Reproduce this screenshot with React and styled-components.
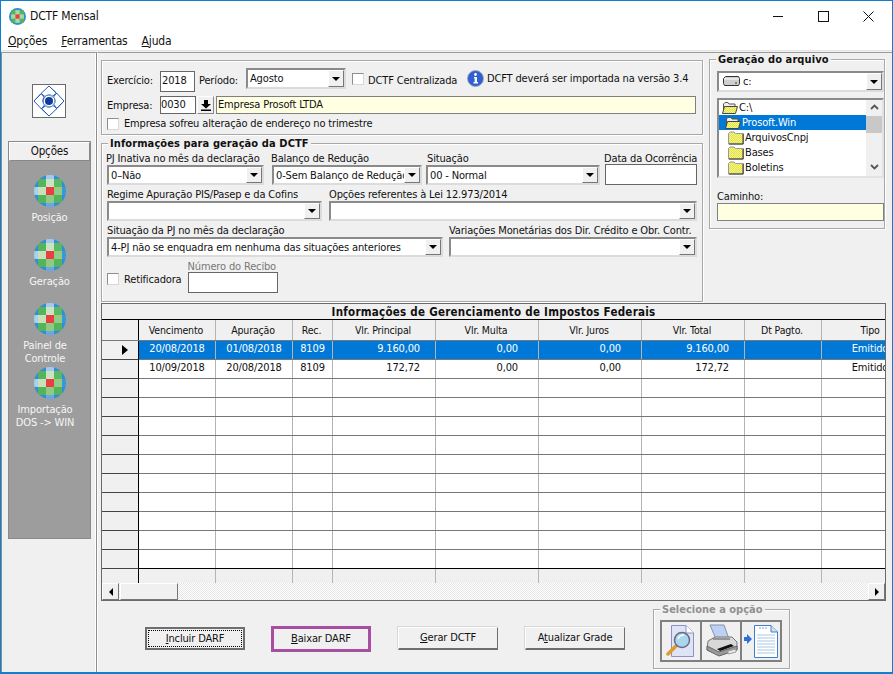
import React from "react";
import styled, { createGlobalStyle } from "styled-components";

const Global = createGlobalStyle`
  html, body { margin: 0; padding: 0; background: #f0f0f0; }
  * { box-sizing: border-box; }
  body { font-family: "DejaVu Sans Condensed", "DejaVu Sans", sans-serif; font-stretch: condensed; font-size: 11px; color: #111; letter-spacing: -0.15px; }
`;

const Window = styled.div`
  width: 893px; height: 674px; border: 1px solid #0f7fd0; border-bottom-width: 2px;
  display: flex; flex-direction: column; background: #f0f0f0; overflow: hidden;
`;
const TitleBar = styled.div`
  height: 31px; background: #fff; display: flex; align-items: center; padding: 0 0 1px 8px; flex: none;
`;
const TitleText = styled.span`font-size: 12px; margin-left: 4px; flex: 1;`;
const WinButtons = styled.div`display: flex; width: 119px; align-items: center; justify-content: flex-start; gap: 34px;`;
const MenuBar = styled.div`
  height: 18px; background: #fff; display: flex; align-items: center; padding-left: 7px; gap: 14px; flex: none; font-size: 12px;
`;
const Body = styled.div`
  flex: 1; display: flex; min-height: 0; border-top: 1px solid #e4e4e4;
`;
const Sidebar = styled.div`
  width: 96px; padding: 31px 0 0 6px; flex: none; display: flex; flex-direction: column;
  border-top: 1px solid #9a9a9a; border-left: 1px solid #8d8d8d; border-right: 1px solid #8d8d8d; margin-top: 1px;
  box-shadow: inset -1px 0 0 #fff;
`;
const LogoBox = styled.div`
  width: 34px; height: 34px; border: 1px solid #6a6a6a; background: #fff; margin-left: 24px; display: flex;
`;
const OptionsPanel = styled.div`
  width: 83px; height: 398px; margin-top: 23px; border: 1px solid #8a8a8a; background: #9d9d9d; display: flex; flex-direction: column;
`;
const OptionsHead = styled.div`
  height: 19px; flex: none; background: #f0f0f0; border: 1px solid #fff; border-right-color: #888; border-bottom-color: #888;
  text-align: center; line-height: 17px; font-size: 11.5px;
`;
const OptionsList = styled.div`padding-top: 14px; display: flex; flex-direction: column;`;
const SideItem = styled.div`height: 64px; display: flex; flex-direction: column; align-items: center;`;
const SideLabel = styled.div`
  color: #f6f6f6; text-align: center; line-height: 13px; margin-top: 4px; padding-right: ${p => p.$shift || 0}px; font-size: 11px; white-space: nowrap;
`;
const Main = styled.div`
  flex: 1; min-width: 0; display: flex; flex-direction: column; padding: 7px 0 0 3px; margin-top: 1px;
  border-top: 1px solid #9a9a9a; border-left: 1px solid #fff; 
`;
const TopRow = styled.div`display: flex; align-items: flex-start; gap: 6px;`;
const LeftCol = styled.div`width: 602px; display: flex; flex-direction: column; gap: 8px;`;

const Group = styled.div`
  position: relative; width: ${p => p.$w}px; height: ${p => p.$h}px; border: 1px solid #a8a8a8; flex: none;
  box-shadow: 1px 1px 0 #fff, inset 1px 1px 0 #fff; padding: ${p => p.$pad || "0"}; margin-top: ${p => p.$mt || 0}px; margin-left: ${p => p.$ml || 0}px;
`;
const Legend = styled.div`
  position: absolute; top: -7px; left: ${p => p.$x}px; padding: 0 2px; background: #f0f0f0; font-weight: 700;
  font-size: 11px; line-height: 14px; color: ${p => p.$c || "#111"}; white-space: nowrap; letter-spacing: ${p => p.$ls ?? 0.1}px;
`;

const Row = styled.div`display: flex; align-items: ${p => p.$align || "center"}; margin-top: ${p => p.$mt || 0}px;`;
const InlineLabel = styled.span`
  width: ${p => p.$w ? p.$w + "px" : "auto"}; margin-left: ${p => p.$ml || 0}px; margin-bottom: ${p => p.$mb || 0}px; white-space: nowrap; flex: none;
  margin-top: ${p => p.$mt || 0}px; line-height: 13px;
`;
const TextBox = styled.div`
  width: ${p => p.$w}px; height: ${p => p.$h || 21}px; background: ${p => p.$bg || "#fff"};
  border: 1px solid ${p => p.$line || "#666"}; padding-left: ${p => p.$pl ?? 1}px; line-height: ${p => (p.$h || 21) - 3}px;
  margin: ${p => p.$mt || 0}px 0 0 ${p => p.$ml || 0}px; flex: none; white-space: nowrap; overflow: hidden; font-size: 11px;
`;
const Combo = styled.div`
  width: ${p => p.$w}px; height: ${p => p.$h || 20}px; flex: none; display: flex; background: #fff;
  border: 2px solid; border-color: #8a8a8a #dcdcdc #dcdcdc #8a8a8a; overflow: hidden;
`;
const ComboText = styled.div`
  flex: 1; min-width: 0; overflow: hidden; white-space: nowrap; padding-left: ${p => p.$pl ?? 2}px; line-height: 15px; font-size: 11px; display: flex; align-items: center; gap: 3px;
`;
const Arrow = styled.div`
  width: 16px; flex: none; background: #f0f0f0; border-right: 1px solid #777; border-bottom: 1px solid #777;
  border-left: 1px solid #fff; border-top: 1px solid #fff; display: flex; align-items: center; justify-content: center;
  &::after { content: ""; border-left: 4px solid transparent; border-right: 4px solid transparent; border-top: 4px solid #000; }
`;
const PickButton = styled.div`
  width: 17px; height: 18px; margin-left: 1px; flex: none; background: #f0f0f0; border: 1px solid #fff; border-right-color: #888; border-bottom-color: #888;
  display: flex; align-items: center; justify-content: center;
`;
const Check = styled.div`
  width: 12px; height: 12px; background: #fff; border: 1px solid #8e8e8e; border-right-color: #d8d8d8; border-bottom-color: #d8d8d8; flex: none;
  margin: ${p => p.$mt || 0}px 0 ${p => p.$mb || 0}px ${p => p.$ml || 0}px;
`;
const IconSlot = styled.div`display: flex; flex: none; margin: ${p => p.$mt || 0}px 0 0 ${p => p.$ml || 0}px;`;
const Field = styled.div`width: ${p => p.$w}px; margin-left: ${p => p.$ml || 0}px; flex: none; display: flex; flex-direction: column;`;
const FieldLabel = styled.div`
  height: ${p => p.$h || 13}px; line-height: ${p => p.$h || 13}px; margin-left: ${p => p.$x || 0}px; white-space: nowrap; color: ${p => p.$c || "#111"};
`;
const FieldRow = styled.div`display: flex; align-items: flex-end; margin-top: ${p => p.$mt ?? 3}px;`;

const DriveGroupBody = styled.div`padding: 11px 0 0 7px; display: flex; flex-direction: column;`;
const FolderBox = styled.div`
  width: 167px; height: 80px; margin-top: 6px; background: #fff; border: 2px solid; border-color: #8a8a8a #e2e2e2 #e2e2e2 #8a8a8a; display: flex; overflow: hidden;
`;
const FolderList = styled.div`flex: 1; overflow: hidden;`;
const FolderItem = styled.div`
  height: 15px; display: flex; align-items: center; gap: 1px; padding-left: ${p => p.$pl}px; white-space: nowrap; font-size: 11px;
  background: ${p => p.$on ? "#0078d7" : "transparent"}; color: ${p => p.$on ? "#fff" : "#111"};
`;
const ListScroll = styled.div`
  width: 16px; flex: none; display: flex; flex-direction: column; align-items: center; background: #f0f0f0; padding-top: 4px;
`;
const ScrollThumb = styled.div`width: 16px; height: 17px; background: #c8c8c8; margin-top: 6px; flex: none;`;
const ScrollDown = styled.div`margin-top: 31px; display: flex; flex: none;`;
const PathLabel = styled.div`margin-top: 12px; height: 13px; line-height: 13px;`;
const PathBox = styled.div`width: 167px; height: 18px; background: #ffffe1; border: 1px solid #808080;`;

const GridWrap = styled.div`
  width: 785px; height: 298px; margin-top: 1px; border: 1px solid #6a6a6a; display: flex; flex-direction: column; overflow: hidden; flex: none;
`;
const GridTitle = styled.div`
  height: 16px; flex: none; border-bottom: 1px solid #000; text-align: center; font-weight: 700; font-size: 11.5px; line-height: 16px; letter-spacing: .26px;
`;
const cols = "37px 77px 77px 40px 103px 103px 103px 103px 77px 1fr";
const GridRow = styled.div`
  display: grid; grid-template-columns: ${cols}; flex: none; height: ${p => p.$h}px;
  border-bottom: ${p => p.$noline ? "none" : `1px solid ${p.$line || "#777"}`};
  background: ${p => p.$on ? "#0078d7" : p.$head ? "#f0f0f0" : "#fff"};
  color: ${p => p.$on ? "#fff" : "#111"};
`;
const Cell = styled.div`
  border-right: ${p => p.$last ? "none" : "1px solid #b4b4b4"}; overflow: hidden; white-space: nowrap; text-align: ${p => p.$align || "center"};
  padding-right: ${p => p.$pr || 0}px; line-height: ${p => p.$lh || 15}px; font-size: ${p => p.$fs || 11}px;
`;
const HeadCell = styled(Cell)`padding-right: 2px; line-height: 20px; font-size: 10.5px;`;
const FixedCell = styled.div`
  background: #f0f0f0; border-right: 1px solid #000; display: flex; align-items: center; justify-content: center; padding-left: 10px;
  margin-bottom: ${p => p.$plain ? 0 : -1}px; border-bottom: ${p => p.$plain ? "none" : "1px solid #444"}; color: #000;
`;
const Marker = styled.div`border-left: 6px solid #000; border-top: 5px solid transparent; border-bottom: 5px solid transparent;`;
const TipoText = styled.div`width: 96px; text-align: center;`;
const HScroll = styled.div`height: 17px; flex: none; display: flex; background-color: #f4f4f4;
  background-image: conic-gradient(#e6e6e6 25%, #fff 0 50%, #e6e6e6 0 75%, #fff 0); background-size: 2px 2px;`;
const HTrack = styled.div`flex: 1;`;
const ScrollBtn = styled.div`
  width: ${p => p.$w || 17}px; flex: none; background: #f0f0f0; border: 1px solid #fff; border-right-color: #777; border-bottom-color: #777;
  display: flex; align-items: center; justify-content: center; margin-left: ${p => p.$ml || 0}px;
`;
const Tri = styled.div`
  border-top: 4px solid transparent; border-bottom: 4px solid transparent;
  ${p => p.$left ? "border-right: 4px solid #000;" : "border-left: 4px solid #000;"}
`;

const Footer = styled.div`display: flex; align-items: flex-start; padding: 8px 0 0 44px;`;
const Btn = styled.div`
  position: relative; width: 100px; height: 23px; margin-top: 18px; flex: none; margin-left: ${p => p.$ml || 0}px;
  background: #f0f0f0; border: 1px solid #fff; border-right: 1px solid #6e6e6e; border-bottom: 2px solid #6e6e6e;
  box-shadow: -1px -1px 0 #d8d8d8; text-align: center; line-height: 20px; font-size: 11px; white-space: nowrap;
`;
const FocusBtn = styled(Btn)`
  border: 2px solid #6e6e6e; box-shadow: none; line-height: 19px;
  &::after { content: ""; position: absolute; inset: 1px; border: 1px dotted #000; }
`;
const MarkedBtn = styled(Btn)`
  height: 26px; margin-top: 17px; border: 3px solid #a74ea3; box-shadow: none;
`;
const ToolStrip = styled.div`
  display: flex; width: 122px; height: 42px; margin: 10px 0 0 6px; border: 2px solid #808080; background: #808080; gap: 2px;
`;
const ToolCell = styled.div`flex: 1; background: #f0f0f0; display: flex; align-items: center; justify-content: center;`;

const BallIcon = () => {
  const c = [
    ["#0e7fc6", "#2f8fd6", "#a3c9ef", "#2f8fd6", "#0e7fc6"],
    ["#2f8fd6", "#55b35c", "#c9e4c2", "#5cb860", "#2f8fd6"],
    ["#a9cfec", "#c6e2bc", "#ea3f3f", "#93cc86", "#3a98d8"],
    ["#2f8fd6", "#55b35c", "#8fca84", "#55b35c", "#2f8fd6"],
    ["#0e7fc6", "#2f8fd6", "#66a9e2", "#2f8fd6", "#0e7fc6"],
  ];
  const p = [0, 4, 12, 20, 28, 32];
  return (
    <svg width="32" height="32" viewBox="0 0 32 32" style={{ flex: "none" }}>
      <clipPath id="ballclip"><circle cx="16" cy="16" r="16" /></clipPath>
      <g clipPath="url(#ballclip)" shapeRendering="crispEdges">
        {c.map((r, y) => r.map((f, x) => (
          <rect key={x + "-" + y} x={p[x]} y={p[y]} width={p[x + 1] - p[x]} height={p[y + 1] - p[y]} fill={f} />
        )))}
      </g>
    </svg>
  );
};
const SmallBall = () => (
  <svg width="17" height="17" viewBox="0 0 32 32" style={{ flex: "none" }}>
    <clipPath id="ballclip2"><circle cx="16" cy="16" r="16" /></clipPath>
    <g clipPath="url(#ballclip2)">
      <rect width="32" height="32" fill="#2f8fd6" />
      <rect x="4" y="4" width="24" height="24" fill="#55b35c" />
      <rect x="12" y="4" width="8" height="24" fill="#a8d8a8" />
      <rect x="4" y="12" width="24" height="8" fill="#a8d8a8" />
      <rect x="12" y="12" width="8" height="8" fill="#ea3f3f" />
    </g>
  </svg>
);
const Logo = () => (
  <svg width="32" height="32" viewBox="0 0 32 32">
    {[0, 90, 180, 270].map(a => (
      <g key={a} transform={`rotate(${a} 16 16)`} fill="none" stroke="#2a5cb4" strokeWidth="1">
        <path d="M16 1 23.500 8.500 19.500 11C17 9.500 14 9.500 12 11.500L8 8.500 16 1" />
        <path d="M8 8.500 1 16" />
        <path d="M12 11.500C10.500 13 10 15 10 17" stroke="#7fa2dc" strokeWidth="1.400" />
      </g>
    ))}
    <circle cx="16" cy="16" r="4" fill="#0c3c9c" />
  </svg>
);
const InfoIcon = () => (
  <svg width="17" height="17" viewBox="0 0 17 17" style={{ flex: "none" }}>
    <circle cx="8.5" cy="8.5" r="8" fill="#2f5fd0" stroke="#a3a9b8" strokeWidth="1" />
    <circle cx="8.5" cy="4.5" r="1.4" fill="#fff" />
    <path d="M7 7h3v5h1v1.4H6.5V12H7.6V8.3H7Z" fill="#fff" />
  </svg>
);
const FolderDither = () => (
  <pattern id="folderdither" width="2" height="2" patternUnits="userSpaceOnUse">
    <rect width="2" height="2" fill="#ffff40" />
    <rect width="1" height="1" fill="#d8d890" />
    <rect x="1" y="1" width="1" height="1" fill="#d8d890" />
  </pattern>
);
const Folder = ({ open }) => (
  <svg width="16" height="14" viewBox="0 0 16 14" style={{ flex: "none" }}>
    <defs><FolderDither /></defs>
    {open ? (
      <>
        <path d="M1.5 11V3L3 1.5h3L7 3h6v2" fill="#eee" stroke="#555" />
        <path d="M.5 12.500 2.500 5.500h13l-2 7Z" fill="url(#folderdither)" stroke="#444" />
      </>
    ) : (
      <>
        <path d="M.5 13V2.500L2 1h4l1.500 1.500h8V13Z" fill="url(#folderdither)" stroke="#999" />
        <path d="M15 3v10H1" fill="none" stroke="#333" />
      </>
    )}
  </svg>
);
const Drive = () => (
  <svg width="17" height="11" viewBox="0 0 17 11" style={{ flex: "none" }}>
    <path d="M2.500.5h13l1 2v5l-1 2H1.500l-1-2v-5Z" fill="#cfcfcf" stroke="#333" />
    <path d="M1 3h15" stroke="#fff" />
    <path d="M12 7h2" stroke="#333" />
  </svg>
);
const PickIcon = () => (
  <svg width="10" height="11" viewBox="0 0 10 11">
    <path d="M3 0h4v4h3L5 8.500 0 4h3ZM0 9.500h10V11H0Z" fill="#000" />
  </svg>
);
const Chevron = ({ up }) => (
  <svg width="9" height="6" viewBox="0 0 9 6" style={{ flex: "none" }}>
    <path d={up ? "M1 5 4.500 1.500 8 5" : "M1 1 4.500 4.500 8 1"} fill="none" stroke="#555" strokeWidth="1.800" />
  </svg>
);
const MinIcon = () => <svg width="11" height="11" viewBox="0 0 11 11"><path d="M0 5.500h10" stroke="#111" /></svg>;
const MaxIcon = () => <svg width="11" height="11" viewBox="0 0 11 11"><rect x=".5" y=".5" width="10" height="10" fill="none" stroke="#111" /></svg>;
const CloseIcon = () => <svg width="11" height="11" viewBox="0 0 11 11"><path d="M.5.500 10.500 10.500M10.500.500.5 10.500" stroke="#111" /></svg>;
const LensIcon = () => (
  <svg width="30" height="34" viewBox="0 0 30 34">
    <path d="M5.500 1.500H20L27.500 9V32.500H5.500Z" fill="#dfe3f6" stroke="#8d8fc6" />
    <path d="M20 1.500V9H27.500" fill="#fff" stroke="#8d8fc6" />
    <path d="M11 21 2 30" stroke="#e09a30" strokeWidth="3.500" strokeLinecap="round" />
    <circle cx="16" cy="16" r="7.500" fill="#a9d8ee" stroke="#6a6a82" strokeWidth="1.500" />
    <path d="M12 15c1-3 3-4 6-4" fill="none" stroke="#fff" strokeWidth="1.500" />
  </svg>
);
const PrinterIcon = () => (
  <svg width="34" height="34" viewBox="0 0 34 34">
    <path d="M6 1h14l5 14H12Z" fill="#bcd2f4" stroke="#8a8fa8" />
    <path d="M4 17 11 13H28L33 18V26L15 31 3 26Z" fill="#d8d8d8" stroke="#777" />
    <path d="M3 22 15 28 33 22V26L15 32 3 26Z" fill="#9a9a9a" stroke="#666" />
    <path d="M13 25 27 20 30 22 16 27Z" fill="#111" />
    <path d="M9 15H26" stroke="#555" />
    <path d="M24 27 32 25 32 28 24 30Z" fill="#eee" stroke="#999" />
  </svg>
);
const ExportIcon = () => (
  <svg width="36" height="34" viewBox="0 0 36 34">
    <path d="M11.500 1.500H28L34.500 8V33.500H11.500Z" fill="#fff" stroke="#3f7ec8" />
    <path d="M28 1.500V8H34.500" fill="#cfe0f4" stroke="#3f7ec8" />
    <path d="M14 11H32M14 14H32M14 17H32M14 20H32M14 23H32M14 26H32M14 29H32" stroke="#a9c8e4" />
    <path d="M16 4h8" stroke="#7a9cc4" strokeDasharray="2 1" />
    <path d="M1 13H4V10L9 15 4 20V17H1Z" fill="#2f6fd8" />
  </svg>
);
const U = styled.span`text-decoration: underline;`;

const rowsData = [
  { on: true, v: "20/08/2018", a: "01/08/2018", p: "9.160,00", m: "0,00", j: "0,00", t: "9.160,00" },
  { v: "10/09/2018", a: "20/08/2018", p: "172,72", m: "0,00", j: "0,00", t: "172,72" },
  ...Array.from({ length: 10 }, () => ({ empty: true })),
];

export default function App() {
  return (
    <>
      <Global />
      <Window>
        <TitleBar>
          <SmallBall />
          <TitleText>DCTF Mensal</TitleText>
          <WinButtons><MinIcon /><MaxIcon /><CloseIcon /></WinButtons>
        </TitleBar>
        <MenuBar>
          <span><U>O</U>pções</span>
          <span><U>F</U>erramentas</span>
          <span><U>A</U>juda</span>
        </MenuBar>
        <Body>
          <Sidebar>
            <LogoBox><Logo /></LogoBox>
            <OptionsPanel>
              <OptionsHead>Opções</OptionsHead>
              <OptionsList>
                <SideItem><BallIcon /><SideLabel>Posição</SideLabel></SideItem>
                <SideItem><BallIcon /><SideLabel>Geração</SideLabel></SideItem>
                <SideItem><BallIcon /><SideLabel $shift={9}>Painel de<br />Controle</SideLabel></SideItem>
                <SideItem><BallIcon /><SideLabel $shift={9}>Importação<br />DOS -&gt; WIN</SideLabel></SideItem>
              </OptionsList>
            </OptionsPanel>
          </Sidebar>
          <Main>
            <TopRow>
              <LeftCol>
                <Group $w={602} $h={75} $pad="7px 0 0 5px">
                  <Row $align="flex-start">
                    <InlineLabel $w={53} $mt={6}>Exercício:</InlineLabel>
                    <TextBox $w={35} $mt={3}>2018</TextBox>
                    <InlineLabel $w={47} $ml={4} $mt={6}>Período:</InlineLabel>
                    <Combo $w={100} $h={21}><ComboText>Agosto</ComboText><Arrow /></Combo>
                    <Check $ml={6} $mt={5} />
                    <InlineLabel $w={92} $ml={4} $mt={6}>DCTF Centralizada</InlineLabel>
                    <IconSlot $ml={7} $mt={2}><InfoIcon /></IconSlot>
                    <InlineLabel $ml={3} $mt={4}>DCFT deverá ser importada na versão 3.4</InlineLabel>
                  </Row>
                  <Row $mt={4}>
                    <InlineLabel $w={53}>Empresa:</InlineLabel>
                    <TextBox $w={36} $h={18} $pl={0}>0030</TextBox>
                    <PickButton><PickIcon /></PickButton>
                    <TextBox $w={480} $h={18} $ml={2} $bg="#ffffe1" $line="#808080">Empresa Prosoft LTDA</TextBox>
                  </Row>
                  <Row $mt={3}>
                    <Check />
                    <InlineLabel $ml={5}>Empresa sofreu alteração de endereço no trimestre</InlineLabel>
                  </Row>
                </Group>
                <Group $w={602} $h={159} $pad="8px 0 0 5px">
                  <Legend $x={6}>Informações para geração da DCTF</Legend>
                  <FieldRow $mt={0}>
                    <Field $w={157}><FieldLabel $x={-1}>PJ Inativa no mês da declaração</FieldLabel><Combo $w={157}><ComboText>0–Não</ComboText><Arrow /></Combo></Field>
                    <Field $w={150} $ml={8}><FieldLabel $x={-1}>Balanço de Redução</FieldLabel><Combo $w={150}><ComboText>0-Sem Balanço de Redução</ComboText><Arrow /></Combo></Field>
                    <Field $w={174} $ml={4}><FieldLabel $x={1}>Situação</FieldLabel><Combo $w={174}><ComboText>00 - Normal</ComboText><Arrow /></Combo></Field>
                    <Field $w={92} $ml={5}><FieldLabel $x={-1}>Data da Ocorrência</FieldLabel><TextBox $w={92} $mt={-1} /></Field>
                  </FieldRow>
                  <FieldRow>
                    <Field $w={215}><FieldLabel>Regime Apuração PIS/Pasep e da Cofins</FieldLabel><Combo $w={215}><ComboText /><Arrow /></Combo></Field>
                    <Field $w={368} $ml={7}><FieldLabel>Opções referentes à Lei 12.973/2014</FieldLabel><Combo $w={368}><ComboText /><Arrow /></Combo></Field>
                  </FieldRow>
                  <FieldRow>
                    <Field $w={336}><FieldLabel>Situação da PJ no mês da declaração</FieldLabel><Combo $w={336}><ComboText>4-PJ não se enquadra em nenhuma das situações anteriores</ComboText><Arrow /></Combo></Field>
                    <Field $w={248} $ml={6}><FieldLabel>Variações Monetárias dos Dir. Crédito e Obr. Contr.</FieldLabel><Combo $w={248}><ComboText /><Arrow /></Combo></Field>
                  </FieldRow>
                  <FieldRow $mt={4}>
                    <Check $mb={8} />
                    <InlineLabel $ml={5} $mb={7}>Retificadora</InlineLabel>
                    <Field $w={90} $ml={6}><FieldLabel $c="#777" $h={11}>Número do Recibo</FieldLabel><TextBox $w={90} /></Field>
                  </FieldRow>
                </Group>
              </LeftCol>
              <Group $w={176} $h={170} $mt={-1}>
                <Legend $x={6}>Geração do arquivo</Legend>
                <DriveGroupBody>
                  <Combo $w={167} $h={21}><ComboText $pl={4}><Drive />c:</ComboText><Arrow /></Combo>
                  <FolderBox>
                    <FolderList>
                      <FolderItem $pl={3}><Folder open />C:\</FolderItem>
                      <FolderItem $on $pl={6}><Folder open />Prosoft.Win</FolderItem>
                      <FolderItem $pl={9}><Folder />ArquivosCnpj</FolderItem>
                      <FolderItem $pl={9}><Folder />Bases</FolderItem>
                      <FolderItem $pl={9}><Folder />Boletins</FolderItem>
                      <FolderItem $pl={9}><Folder /></FolderItem>
                    </FolderList>
                    <ListScroll>
                      <Chevron up />
                      <ScrollThumb />
                      <ScrollDown><Chevron /></ScrollDown>
                    </ListScroll>
                  </FolderBox>
                  <PathLabel>Caminho:</PathLabel>
                  <PathBox />
                </DriveGroupBody>
              </Group>
            </TopRow>
            <GridWrap>
              <GridTitle>Informações de Gerenciamento de Impostos Federais</GridTitle>
              <GridRow $head $h={21}>
                <FixedCell $plain />
                <HeadCell>Vencimento</HeadCell>
                <HeadCell>Apuração</HeadCell>
                <HeadCell>Rec.</HeadCell>
                <HeadCell>Vlr. Principal</HeadCell>
                <HeadCell>Vlr. Multa</HeadCell>
                <HeadCell>Vlr. Juros</HeadCell>
                <HeadCell>Vlr. Total</HeadCell>
                <HeadCell>Dt Pagto.</HeadCell>
                <HeadCell $last><TipoText>Tipo</TipoText></HeadCell>
              </GridRow>
              {rowsData.map((r, i) => (
                <GridRow key={i} $h={19} $on={r.on} $line={i === 11 ? "#000" : "#777"}>
                  <FixedCell>{r.on && <Marker />}</FixedCell>
                  <Cell>{r.v}</Cell>
                  <Cell>{r.a}</Cell>
                  <Cell>{r.empty ? "" : "8109"}</Cell>
                  <Cell $align="right" $pr={15}>{r.p}</Cell>
                  <Cell $align="right" $pr={20}>{r.m}</Cell>
                  <Cell $align="right" $pr={20}>{r.j}</Cell>
                  <Cell $align="right" $pr={15}>{r.t}</Cell>
                  <Cell />
                  <Cell $last><TipoText>{r.empty ? "" : "Emitido"}</TipoText></Cell>
                </GridRow>
              ))}
              <GridRow $head $h={14} $noline>
                <FixedCell $plain />
                <Cell /><Cell /><Cell /><Cell /><Cell /><Cell /><Cell /><Cell /><Cell $last />
              </GridRow>
              <HScroll>
                <ScrollBtn><Tri $left /></ScrollBtn>
                <ScrollBtn $w={58} $ml={1} />
                <HTrack />
                <ScrollBtn><Tri /></ScrollBtn>
              </HScroll>
            </GridWrap>
            <Footer>
              <FocusBtn><U>I</U>ncluir DARF</FocusBtn>
              <MarkedBtn $ml={26}><U>B</U>aixar DARF</MarkedBtn>
              <Btn $ml={27}><U>G</U>erar DCTF</Btn>
              <Btn $ml={27}>A<U>t</U>ualizar Grade</Btn>
              <Group $w={137} $h={60} $ml={28}>
                <Legend $x={6} $c="#909090" $ls={0}>Selecione a opção</Legend>
                <ToolStrip>
                  <ToolCell><LensIcon /></ToolCell>
                  <ToolCell><PrinterIcon /></ToolCell>
                  <ToolCell><ExportIcon /></ToolCell>
                </ToolStrip>
              </Group>
            </Footer>
          </Main>
        </Body>
      </Window>
    </>
  );
}
